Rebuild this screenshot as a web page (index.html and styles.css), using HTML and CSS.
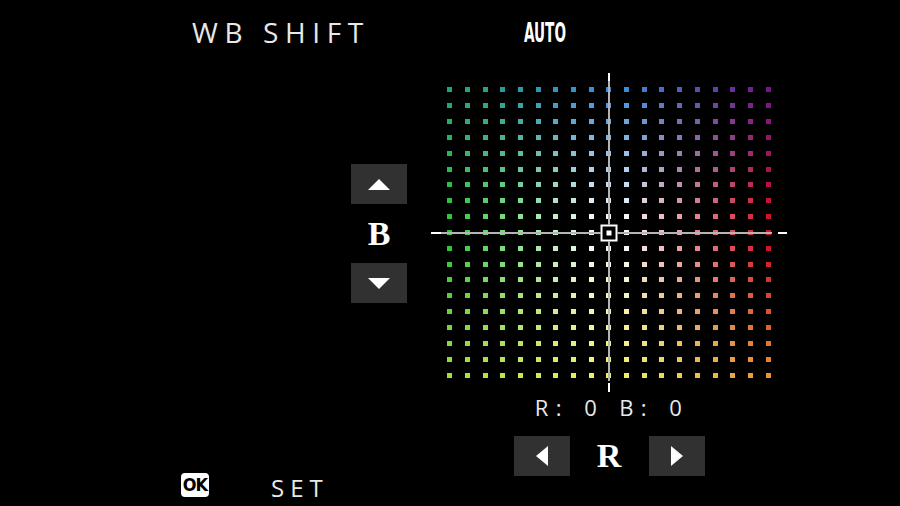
FILE: index.html
```html
<!DOCTYPE html>
<html lang="en">
<head>
    <meta charset="UTF-8">
    <meta name="viewport" content="width=device-width, initial-scale=1.0">
    <title>WB Shift</title>
    <link rel="stylesheet" href="styles.css">
</head>
<body>
    <div class="screen">
        <div class="left-col">
            <h1 class="title">WB SHIFT</h1>
            <div class="axis-control vertical">
                <div class="arrow-btn">
                    <svg width="22" height="11" viewBox="0 0 22 11"><polygon points="11,0 22,11 0,11" fill="#fff"/></svg>
                </div>
                <div class="axis-label">B</div>
                <div class="arrow-btn">
                    <svg width="22" height="11" viewBox="0 0 22 11"><polygon points="0,0 22,0 11,11" fill="#fff"/></svg>
                </div>
            </div>
            <div class="footer">
                <span class="ok-badge">OK</span>
                <span class="footer-label">SET</span>
            </div>
        </div>

        <div class="right-col">
            <div class="mode"><span>AUTO</span></div>
            <div class="chart">
                <div class="dot-grid" id="dotGrid"></div>
                <div class="axis-h"></div>
                <div class="axis-v"></div>
                <div class="cursor"></div>
            </div>
            <div class="readout">R: 0 B: 0</div>
            <div class="axis-control horizontal">
                <div class="arrow-btn">
                    <svg width="12" height="20" viewBox="0 0 12 20"><polygon points="12,0 12,20 0,10" fill="#fff"/></svg>
                </div>
                <div class="axis-label">R</div>
                <div class="arrow-btn">
                    <svg width="12" height="20" viewBox="0 0 12 20"><polygon points="0,0 12,10 0,20" fill="#fff"/></svg>
                </div>
            </div>
        </div>
    </div>

    <script src="script.js"></script>
</body>
</html>
```

FILE: styles.css
```css
body {
    margin: 0;
    padding: 0;
    background-color: #000;
    color: #eee;
    font-family: "Open Sans", "DejaVu Sans", sans-serif;
    overflow: hidden;
}
.screen {
    display: flex;
    height: 506px;
    padding-left: 181px;
    gap: 24px;
}
.left-col {
    width: 226px;
    display: flex;
    flex-direction: column;
}
.title {
    margin: 18px 0 0 11px;
    font-size: 28px;
    line-height: 28px;
    font-weight: 400;
    letter-spacing: 6.6px;
    color: #e8e8e8;
}
.axis-control {
    display: flex;
    align-items: center;
}
.axis-control.vertical {
    flex-direction: column;
    width: 56px;
    margin: 118px 0 0 auto;
}
.axis-control.vertical .axis-label {
    height: 59px;
}
.axis-control.horizontal {
    justify-content: center;
    margin-top: 18px;
}
.axis-control.horizontal .axis-label {
    width: 79px;
}
.arrow-btn {
    width: 56px;
    height: 40px;
    background-color: #313131;
    display: flex;
    align-items: center;
    justify-content: center;
}
.axis-label {
    display: flex;
    align-items: center;
    justify-content: center;
    font-family: "Liberation Serif", serif;
    font-weight: bold;
    font-size: 34px;
    color: #fff;
}
.footer {
    margin-top: auto;
    margin-bottom: 9px;
    display: flex;
    align-items: flex-end;
}
.ok-badge {
    width: 28px;
    height: 24px;
    border-radius: 4px;
    background-color: #fff;
    color: #000;
    font-family: "DejaVu Sans Condensed", "DejaVu Sans", sans-serif;
    font-weight: bold;
    font-size: 18px;
    line-height: 24px;
    letter-spacing: -1px;
    text-align: center;
}
.footer-label {
    margin-left: 62px;
    margin-bottom: -3px;
    font-size: 24px;
    line-height: 24px;
    letter-spacing: 6px;
    color: #e8e8e8;
}
.right-col {
    width: 356px;
    display: flex;
    flex-direction: column;
}
.mode {
    margin: 19px 0 0 93px;
    height: 27px;
    font-family: "DejaVu Sans Condensed", "DejaVu Sans", sans-serif;
    font-weight: bold;
    font-size: 27px;
    line-height: 27px;
    color: #fff;
}
.mode span {
    display: inline-block;
    transform: scaleX(0.56);
    transform-origin: left center;
}
.chart {
    position: relative;
    height: 319px;
    margin-top: 27px;
}
.dot-grid {
    display: grid;
    grid-template-columns: repeat(19, 17.7px);
    grid-auto-rows: 15.85px;
    place-items: center;
    width: 336.3px;
    margin: 8.9px auto 0;
}
.dot {
    width: 5px;
    height: 5px;
}
.axis-h {
    position: absolute;
    left: 0;
    right: 0;
    top: calc(50% - 1px);
    height: 2px;
    background: linear-gradient(to right, #fff 0 10px, #b4b4b4 10px calc(100% - 15px), transparent calc(100% - 15px) calc(100% - 9px), #fff calc(100% - 9px));
}
.axis-v {
    position: absolute;
    top: 0;
    bottom: 0;
    left: calc(50% - 1px);
    width: 2px;
    background: linear-gradient(to bottom, #fff 0 8px, #b4b4b4 8px calc(100% - 11px), transparent calc(100% - 11px) calc(100% - 9px), #fff calc(100% - 9px));
}
.cursor {
    position: absolute;
    left: 50%;
    top: 50%;
    width: 13px;
    height: 13px;
    border: 2px solid #fff;
    background-color: #000;
    transform: translate(-50%, -50%);
}
.cursor::after {
    content: "";
    position: absolute;
    left: 4px;
    top: 4px;
    width: 5px;
    height: 5px;
    background-color: #fff;
}
.readout {
    margin-top: 4px;
    text-align: center;
    font-size: 22px;
    line-height: 22px;
    letter-spacing: 7.4px;
    word-spacing: 2px;
    color: #e8e8e8;
    padding-left: 6px;
}
```

FILE: script.js
```js
const grid = document.getElementById('dotGrid');
const steps = 9;

const colors = {
    center: [250, 250, 250],
    top: [56, 142, 220],
    bottom: [240, 240, 100],
    left: [44, 200, 58],
    right: [206, 20, 42],
    topLeft: [28, 168, 116],
    topRight: [118, 20, 140],
    bottomLeft: [160, 222, 62],
    bottomRight: [232, 146, 50]
};

// keep a little white area round the centre before the colour starts
function ease(t) {
    return Math.min(1, Math.max(0, (t - 0.1) / 0.9));
}

function mix(a, b, c, d, x, y) {
    return a.map((v, i) => Math.round(
        v * (1 - x) * (1 - y) + b[i] * x * (1 - y) + c[i] * (1 - x) * y + d[i] * x * y
    ));
}

for (let row = -steps; row <= steps; row++) {
    for (let col = -steps; col <= steps; col++) {
        const x = ease(Math.abs(col) / steps);
        const y = ease(Math.abs(row) / steps);
        const side = col < 0 ? colors.left : colors.right;
        const vert = row < 0 ? colors.top : colors.bottom;
        let corner;
        if (row < 0) corner = col < 0 ? colors.topLeft : colors.topRight;
        else corner = col < 0 ? colors.bottomLeft : colors.bottomRight;

        const rgb = mix(colors.center, side, vert, corner, x, y);
        const dot = document.createElement('div');
        dot.classList.add('dot');
        dot.style.backgroundColor = 'rgb(' + rgb.join(',') + ')';
        grid.appendChild(dot);
    }
}
```
